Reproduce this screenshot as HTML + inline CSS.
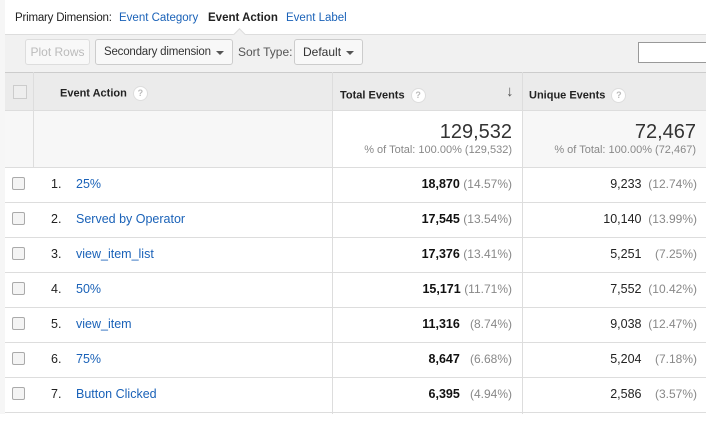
<!DOCTYPE html><html><head><style>
body{margin:0;width:706px;height:414px;overflow:hidden;background:#fff;font-family:"Liberation Sans",Roboto,sans-serif;font-size:12px;color:#222;position:relative}
.a{position:absolute;white-space:nowrap}
.lnk{color:#1a62b8}
.q{display:inline-block;width:13px;height:13px;border:1px solid #ddd;border-radius:50%;background:#fff;color:#bbb;font-size:9px;text-align:center;line-height:13px;vertical-align:middle;margin-left:6px}
.btn{position:absolute;top:39px;height:26px;border:1px solid #ccc;border-radius:3px;background:#f8f8f8;box-sizing:border-box;line-height:24px;font-size:12px;color:#333;white-space:nowrap}
.tri{position:absolute;right:8px;top:11px;width:0;height:0;border-left:4px solid transparent;border-right:4px solid transparent;border-top:4px solid #555}
.cb{position:absolute;left:12px;width:11px;height:11px;border:1px solid #aaa;border-radius:2px;background:#f4f4f4}
.row{position:absolute;left:5px;width:701px;height:35px;border-top:1px solid #ddd;box-sizing:border-box}
.num{position:absolute;left:51px;width:12px}
.t{position:absolute;right:194px;font-weight:bold;color:#111}
.p{color:#888;font-weight:normal;font-size:12px}
</style></head><body>
<div class="a" style="left:0;top:0;width:5px;height:414px;background:#f6f6f6"></div>
<div class="a" style="left:15px;top:12px;color:#222;font-size:11.5px;letter-spacing:-0.2px">Primary Dimension:</div>
<div class="a lnk" style="left:119px;top:12px;font-size:11.5px">Event Category</div>
<div class="a" style="left:208px;top:12px;font-weight:bold;font-size:11.5px">Event Action</div>
<div class="a lnk" style="left:286px;top:12px;font-size:11.5px">Event Label</div>
<div class="a" style="left:5px;top:34px;width:701px;height:38px;background:#f1f1f1;border-top:1px solid #ddd"></div>
<div class="a" style="left:235px;top:30px;width:8px;height:8px;background:#f1f1f1;border-left:1px solid #ddd;border-top:1px solid #ddd;transform:rotate(45deg)"></div>
<div class="btn" style="left:25px;width:65px;color:#bbb;text-align:center;border-color:#ddd">Plot Rows</div>
<div class="btn" style="left:95px;width:138px;padding-left:8px;font-size:11.5px;letter-spacing:-0.2px">Secondary dimension<span class="tri"></span></div>
<div class="a" style="left:238px;top:45px;color:#555">Sort Type:</div>
<div class="btn" style="left:294px;width:69px;padding-left:8px">Default<span class="tri"></span></div>
<div class="a" style="left:638px;top:42px;width:70px;height:21px;border:1px solid #999;background:#fff;box-sizing:border-box"></div>
<div class="a" style="left:5px;top:72px;width:701px;height:39px;background:#ebebeb;border-top:1px solid #ccc;border-bottom:1px solid #ddd;box-sizing:border-box"></div>
<div class="a" style="left:5px;top:111px;width:701px;height:56px;background:#f7f7f7"></div>
<div class="a" style="left:333px;top:111px;width:189px;height:56px;background:#fff"></div>
<div class="a" style="left:33px;top:72px;width:1px;height:95px;background:#ddd"></div>
<div class="a" style="left:332px;top:72px;width:1px;height:342px;background:#ddd"></div>
<div class="a" style="left:522px;top:72px;width:1px;height:342px;background:#ddd"></div>
<div class="a" style="left:13px;top:85px;width:12px;height:12px;border:1px solid #ccc;background:#eee"></div>
<div class="a" style="left:60px;top:86px;font-weight:bold;font-size:11px">Event Action<span class="q">?</span></div>
<div class="a" style="left:340px;top:88px;font-weight:bold;font-size:11px">Total Events<span class="q">?</span></div>
<div class="a" style="left:506px;top:83px;font-size:15px;color:#555;font-weight:bold">↓</div>
<div class="a" style="left:529px;top:88px;font-weight:bold;font-size:11px">Unique Events<span class="q">?</span></div>
<div class="a" style="right:194px;top:121px;font-size:20px;color:#333">129,532</div>
<div class="a" style="right:194px;top:144px;font-size:11px;color:#888">% of Total: 100.00% (129,532)</div>
<div class="a" style="right:10px;top:121px;font-size:20px;color:#333">72,467</div>
<div class="a" style="right:10px;top:144px;font-size:11px;color:#888">% of Total: 100.00% (72,467)</div>
<div class="row" style="top:167px"></div><div class="row" style="top:202px"></div><div class="row" style="top:237px"></div><div class="row" style="top:272px"></div><div class="row" style="top:307px"></div><div class="row" style="top:342px"></div><div class="row" style="top:377px"></div><div class="row" style="top:412px"></div>
<div style="position:absolute;left:0;top:177px;width:706px;font-size:12.5px">
<div style="position:absolute;top:0;width:706px"><div class="cb"></div><span class="num">1.</span><span class="a lnk" style="left:76px">25%</span><span class="t">18,870 <span class="p">(14.57%)</span></span><span class="a" style="right:9px">9,233 <span class="p">&nbsp;(12.74%)</span></span></div>
<div style="position:absolute;top:35px;width:706px"><div class="cb"></div><span class="num">2.</span><span class="a lnk" style="left:76px">Served by Operator</span><span class="t">17,545 <span class="p">(13.54%)</span></span><span class="a" style="right:9px">10,140 <span class="p">&nbsp;(13.99%)</span></span></div>
<div style="position:absolute;top:70px;width:706px"><div class="cb"></div><span class="num">3.</span><span class="a lnk" style="left:76px">view_item_list</span><span class="t">17,376 <span class="p">(13.41%)</span></span><span class="a" style="right:9px">5,251 <span class="p">&nbsp;&nbsp;&nbsp;(7.25%)</span></span></div>
<div style="position:absolute;top:105px;width:706px"><div class="cb"></div><span class="num">4.</span><span class="a lnk" style="left:76px">50%</span><span class="t">15,171 <span class="p">(11.71%)</span></span><span class="a" style="right:9px">7,552 <span class="p">&nbsp;(10.42%)</span></span></div>
<div style="position:absolute;top:140px;width:706px"><div class="cb"></div><span class="num">5.</span><span class="a lnk" style="left:76px">view_item</span><span class="t">11,316 <span class="p">&nbsp;&nbsp;(8.74%)</span></span><span class="a" style="right:9px">9,038 <span class="p">&nbsp;(12.47%)</span></span></div>
<div style="position:absolute;top:175px;width:706px"><div class="cb"></div><span class="num">6.</span><span class="a lnk" style="left:76px">75%</span><span class="t">8,647 <span class="p">&nbsp;&nbsp;(6.68%)</span></span><span class="a" style="right:9px">5,204 <span class="p">&nbsp;&nbsp;&nbsp;(7.18%)</span></span></div>
<div style="position:absolute;top:210px;width:706px"><div class="cb"></div><span class="num">7.</span><span class="a lnk" style="left:76px">Button Clicked</span><span class="t">6,395 <span class="p">&nbsp;&nbsp;(4.94%)</span></span><span class="a" style="right:9px">2,586 <span class="p">&nbsp;&nbsp;&nbsp;(3.57%)</span></span></div>
</div>
</body></html>
